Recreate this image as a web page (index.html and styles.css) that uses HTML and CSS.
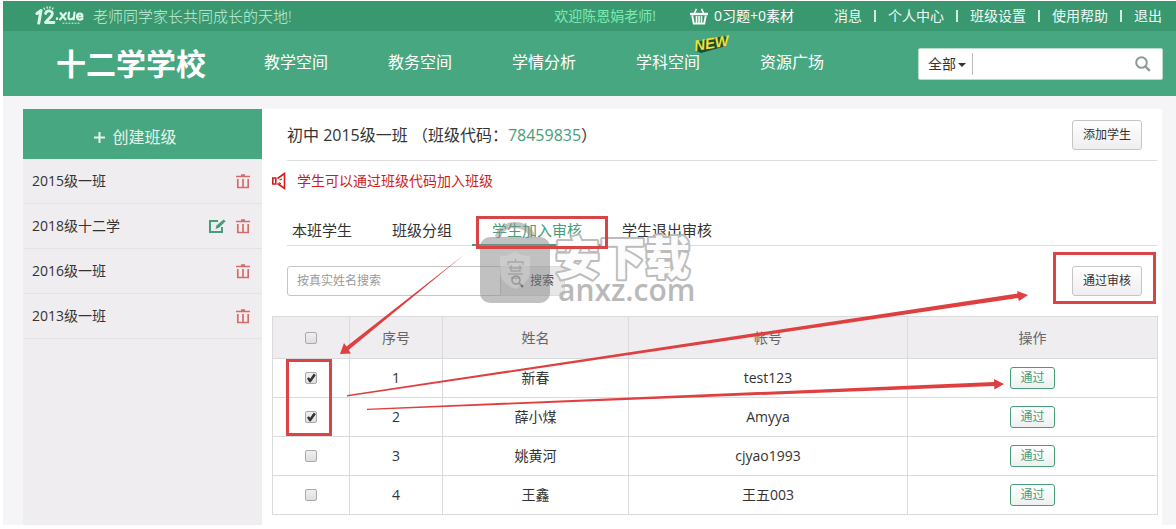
FILE: index.html
```html
<!DOCTYPE html>
<html lang="zh-CN">
<head>
<meta charset="utf-8">
<meta name="viewport" content="width=device-width, initial-scale=1">
<title>十二学学校</title>
<link rel="stylesheet" href="styles.css">
</head>
<body>
<svg class="defs" aria-hidden="true">
  <symbol id="trash" viewBox="0 0 14 15"><path d="M0 2.500h14M5 1h4" stroke-width="1.600"/><path d="M1.800 5v8.500h10.400V5M7 5v8" stroke-width="1.700"/></symbol>
  <symbol id="edit" viewBox="0 0 17 15"><path d="M9 2H1v11h12V8" stroke-width="2"/><path d="M6.500 10l1-3.400L14.600 .5l2 1.700L10 8.800z" class="solid"/></symbol>
</svg>
<div class="page">
  <div class="topbar">
    <a class="brand" href="#" aria-label="12xue">
      <svg width="50" height="20" viewBox="0 0 50 20" fill="none" stroke="#dcf8ea" stroke-linecap="round" stroke-linejoin="round">
        <path d="M2 7.500L6 4.500L3.800 17" stroke-width="3"/>
        <path d="M10.500 7.500C12 3.500 19 4.500 17 9C15.500 12 12 14 10.500 16.500H19" stroke-width="2.800"/>
        <path d="M9 2.200l.5 1M12 .8l.2 1.400M15 .8l-.2 1.400M18 2l-.5 1" stroke-width="1.300"/>
        <path d="M22 12.500v.2" stroke-width="2.500"/>
        <path d="M25.500 7l5 6.500M31 7l-6 6.500M34 6.500l-.5 4.500c-.3 3 4 3 5 .5M39.500 6.500l-.7 7M42 10.500h5.500c0-4-5-4-5.500-.3-.5 4 3.500 4 5.500 2.500" stroke-width="2.100"/>
        <path d="M28 17.200h16" stroke-width="1" stroke-dasharray="1 2"/>
      </svg>
    </a>
    <span class="slogan">老师同学家长共同成长的天地!</span>
    <span class="welcome">欢迎陈恩娟老师!</span>
    <a class="basket" href="#">
      <svg width="18" height="17" viewBox="0 0 18 17" fill="none" stroke="#fff"><path d="M0 6h18" stroke-width="2.400"/><path d="M2.200 7.500L3.800 15.600h10.400L15.800 7.500" stroke-width="1.900"/><path d="M4.500 5L6.500 .8M13.500 5L11.500 .8M6.500 8v7M9 8v7M11.500 8v7" stroke-width="1.600"/></svg>
      0习题+0素材
    </a>
    <nav class="links" aria-label="用户">
      <a href="#">消息</a><i></i><a href="#">个人中心</a><i></i><a href="#">班级设置</a><i></i><a href="#">使用帮助</a><i></i><a href="#">退出</a>
    </nav>
  </div>
  <header class="header">
    <h1 class="school">十二学学校</h1>
    <nav class="menu" aria-label="主导航">
      <a href="#">教学空间</a><a href="#">教务空间</a><a href="#">学情分析</a>
      <a href="#">学科空间
        <svg class="new" width="44" height="24" viewBox="0 0 44 24"><path d="M3 9L31 3l4 2-2 8L8 20l-4-2z" fill="#17512f"/><text x="2" y="18" transform="rotate(-9 2 18)">NEW</text></svg>
      </a>
      <a href="#">资源广场</a>
    </nav>
    <form class="search">
      <select class="scope" aria-label="搜索范围"><option>全部</option></select>
      <input class="query" type="text" aria-label="搜索内容">
      <button class="go" type="button" aria-label="搜索"><svg width="16" height="16" viewBox="0 0 16 16" fill="none" stroke="#8f9a95"><circle cx="6.500" cy="6.500" r="5.300" stroke-width="2"/><path d="M10.500 10.500l4.300 4.300" stroke-width="2.400"/></svg></button>
    </form>
  </header>
  <div class="body">
    <aside class="side">
      <button class="create" type="button"><svg width="11" height="11" viewBox="0 0 11 11"><path d="M5.500 0v11M0 5.500h11" stroke="#e4f5ec" stroke-width="2"/></svg>创建班级</button>
      <ul class="classes">
        <li><a href="#">2015级一班</a><button type="button" aria-label="删除"><svg class="trash"><use href="#trash"/></svg></button></li>
        <li><a href="#">2018级十二学</a><button type="button" aria-label="编辑"><svg class="edit"><use href="#edit"/></svg></button><button type="button" aria-label="删除"><svg class="trash"><use href="#trash"/></svg></button></li>
        <li><a href="#">2016级一班</a><button type="button" aria-label="删除"><svg class="trash"><use href="#trash"/></svg></button></li>
        <li><a href="#">2013级一班</a><button type="button" aria-label="删除"><svg class="trash"><use href="#trash"/></svg></button></li>
      </ul>
    </aside>
    <main class="main">
      <div class="title">
        <h2>初中 2015级一班 （班级代码：<b>78459835</b>）</h2>
        <button class="btn" type="button">添加学生</button>
      </div>
      <p class="notice"><svg width="14" height="18" viewBox="0 0 14 18" fill="none" stroke="#cf1c1c" stroke-width="1.600"><path d="M.8 6h3v6h-3zM5.500 6.500L12.500 1.500v15L5.500 11.500"/><path d="M7.500 8l2.500-1M7 10.500l2 1.500" stroke-width="1.200"/></svg>学生可以通过班级代码加入班级</p>
      <nav class="tabs" aria-label="学生管理">
        <a href="#">本班学生</a><a href="#">班级分组</a><a class="on" href="#">学生加入审核</a><a href="#">学生退出审核</a>
      </nav>
      <div class="tools">
        <form class="find">
          <input type="text" placeholder="按真实姓名搜索" aria-label="按真实姓名搜索">
          <button type="button"><svg width="13" height="13" viewBox="0 0 13 13" fill="none" stroke="#444"><circle cx="5" cy="5" r="4" stroke-width="1.600"/><path d="M8 8l4 4" stroke-width="2"/></svg>搜索</button>
        </form>
        <button class="btn" type="button">通过审核</button>
      </div>
      <table class="grid">
        <colgroup><col class="c1"><col class="c2"><col class="c3"><col class="c4"><col class="c5"></colgroup>
        <thead><tr><th><input type="checkbox" aria-label="全选"></th><th>序号</th><th>姓名</th><th>帐号</th><th>操作</th></tr></thead>
        <tbody>
          <tr><td><input type="checkbox" aria-label="新春" checked></td><td>1</td><td>新春</td><td>test123</td><td><button class="pass" type="button">通过</button></td></tr>
          <tr><td><input type="checkbox" aria-label="薛小煤" checked></td><td>2</td><td>薛小煤</td><td>Amyya</td><td><button class="pass" type="button">通过</button></td></tr>
          <tr><td><input type="checkbox" aria-label="姚黄河"></td><td>3</td><td>姚黄河</td><td>cjyao1993</td><td><button class="pass" type="button">通过</button></td></tr>
          <tr><td><input type="checkbox" aria-label="王鑫"></td><td>4</td><td>王鑫</td><td>王五003</td><td><button class="pass" type="button">通过</button></td></tr>
        </tbody>
      </table>
    </main>
  </div>
  <svg class="marks" width="1176" height="529" viewBox="0 0 1176 529">
    <g class="watermark">
      <path d="M498 237C501 221 529 221 532 237" fill="none" stroke="#8c8c8c" stroke-width="6" opacity=".5"/>
      <rect x="480" y="237" width="70" height="66" rx="10" fill="#8c8c8c" opacity=".54"/>
      <path d="M515 251c5 4 9 5 15 5v16c0 8-7 13-15 17-8-4-15-9-15-17v-16c6 0 10-1 15-5z" fill="#ddd" opacity=".4"/>
      <path d="M508 265v-3h15v3M515.500 259v3M509 268h13M511 265v6h9v-6M508 274h15M511 278h9" fill="none" stroke="#888" stroke-width="1.300" opacity=".55"/>
      <text class="wm-name" x="555" y="275">安下载</text>
      <text class="wm-site" x="558" y="301">anxz.com</text>
    </g>
    <g fill="none" stroke="#d94446" stroke-width="3">
      <rect x="477.500" y="217.500" width="129" height="30"/>
      <rect x="1054.500" y="253.500" width="100" height="49"/>
      <rect x="287.500" y="360.500" width="43" height="74"/>
    </g>
    <g fill="#e03f3f">
      <path d="M465 254L348.500 350L351 353.500L340 354L344 343L346.500 346.500Z"/>
      <path d="M347 395L1017.500 293.500L1017 291L1028 295L1019 301L1018 298L347 396.500Z"/>
      <path d="M367 408.700L994 382V379L1004 384L994.500 389.500L994 386L367 410Z"/>
    </g>
  </svg>
</div>
</body>
</html>
```
FILE: styles.css
```css
* { box-sizing: border-box; }
body {
  margin: 0;
  background: #fff;
  color: #333;
  font: 14px/20px "Open Sans", "Noto Sans CJK SC", sans-serif;
}
a { color: inherit; text-decoration: none; }
button, input, select { font: inherit; color: inherit; margin: 0; }
button { cursor: pointer; }
svg { flex: none; display: block; }
.defs { position: absolute; width: 0; height: 0; }
.page { position: relative; padding: 1px 0 4px 3px; }

.topbar {
  display: flex;
  align-items: center;
  height: 30px;
  padding: 0 14px 0 32px;
  background: #399870;
  color: #f0fbf5;
  white-space: nowrap;
}
.slogan { margin-left: 8px; font-size: 15px; font-weight: 300; color: #c4efd9; }
.welcome { margin-left: auto; color: #7deab0; }
.basket { display: flex; align-items: center; gap: 6px; margin-left: 34px; color: #fff; }
.links { display: flex; align-items: center; gap: 12px; margin-left: 40px; }
.links i { width: 2px; height: 12px; background: #cdeedd; }

.header {
  display: flex;
  align-items: center;
  height: 65px;
  padding: 0 13px 0 53px;
  background: #47a780;
  color: #fff;
  white-space: nowrap;
}
.school { margin: 0; font-size: 30px; line-height: 40px; font-weight: 700; }
.menu { display: flex; gap: 60px; margin-left: 58px; padding-bottom: 4px; font-size: 16px; }
.menu a { position: relative; }
.new { position: absolute; left: 57px; top: -19px; }
.new text { font: italic 700 15px "Liberation Sans", sans-serif; fill: #f2df3a; }
.search {
  display: flex;
  align-items: center;
  width: 245px;
  height: 32px;
  margin-left: auto;
  background: #fff;
  color: #333;
  border: 1px solid #b9dccb;
  border-radius: 2px;
}
.scope {
  appearance: none;
  width: 54px;
  height: 22px;
  padding: 0 0 0 9px;
  border: 0;
  border-right: 1px solid #bbb;
  background: url("data:image/svg+xml,%3Csvg xmlns='http://www.w3.org/2000/svg' width='8' height='4'%3E%3Cpath d='M0 0h8L4 4z' fill='%23333'/%3E%3C/svg%3E") 39px 10px no-repeat;
}
.query { flex: 1; min-width: 0; border: 0; background: none; }
.go { padding: 0 11px; border: 0; background: none; }

.body {
  display: flex;
  padding: 13px 14px 0 20px;
  background: #f5f4f7;
}
.side { width: 239px; flex: none; background: #efedf0; }
.create {
  display: flex;
  align-items: center;
  justify-content: center;
  gap: 7px;
  width: 100%;
  height: 50px;
  padding: 6px 14px 0 0;
  border: 0;
  background: #47a780;
  color: #e4f5ec;
  font-size: 16px;
}
.classes { margin: 0; padding: 0; list-style: none; }
.classes li {
  display: flex;
  align-items: center;
  gap: 10px;
  height: 45px;
  padding: 0 12px 0 9px;
  border-bottom: 1px solid #e4e2e5;
}
.classes a { flex: 1; }
.classes button { padding: 0; border: 0; background: none; }
.trash { width: 14px; height: 15px; fill: none; stroke: #d56c6c; }
.edit { width: 17px; height: 15px; fill: none; stroke: #479d78; }
.solid { fill: #479d78; stroke: none; }

.main { flex: 1; min-width: 0; padding: 0 5px 10px 10px; background: #fff; }
.title {
  display: flex;
  align-items: center;
  justify-content: space-between;
  height: 52px;
  margin-left: 15px;
  padding-right: 15px;
  border-bottom: 1px solid #ddd;
}
.title h2 { margin: 0; font-size: 16px; font-weight: 400; }
.title b { font-weight: 400; color: #479d78; }
.btn {
  width: 70px;
  height: 30px;
  padding: 0;
  border: 1px solid #c5c5c8;
  border-radius: 3px;
  background: linear-gradient(#fff, #efedf0);
  font-size: 12px;
}
.notice {
  display: flex;
  align-items: center;
  gap: 11px;
  height: 40px;
  margin: 0;
  color: #cf1c1c;
}
.tabs {
  display: flex;
  height: 45px;
  align-items: flex-end;
  background: linear-gradient(#ddd, #ddd) 15px 100% / 100% 1px no-repeat;
  font-size: 15px;
}
.tabs a { height: 30px; padding: 4px 20px 0; }
.tabs .on { color: #479d78; border-bottom: 2px solid #479d78; }
.tools {
  display: flex;
  justify-content: space-between;
  padding: 20px 15px;
  font-size: 12px;
}
.find { display: flex; height: 30px; }
.find input {
  width: 214px;
  padding: 0 9px;
  border: 1px solid #c5c5c8;
  border-radius: 3px 0 0 3px;
}
.find input::placeholder { color: #999; opacity: 1; }
.find button {
  display: flex;
  align-items: center;
  gap: 6px;
  padding: 0 10px;
  border: 1px solid #dcdadd;
  border-left: 0;
  border-radius: 0 3px 3px 0;
  background: #e8e6e9;
}
.grid { width: 100%; border-collapse: collapse; table-layout: fixed; }
.c1 { width: 77px; }
.c2 { width: 93px; }
.c3 { width: 186px; }
.c4 { width: 279px; }
.c5 { width: 250px; }
.grid th, .grid td {
  height: 39px;
  padding: 0;
  border: 1px solid #dad9dc;
  text-align: center;
  font-weight: 400;
}
.grid th { height: 42px; background: #efedf0; color: #666; }
.grid input {
  appearance: none;
  display: block;
  width: 12px;
  height: 12px;
  margin: 0 auto;
  border: 1px solid #aaa;
  border-radius: 2px;
  background: linear-gradient(#f0f0f0, #dedede);
}
.grid input:checked::after {
  content: "";
  display: block;
  height: 10px;
  background: #333;
  clip-path: polygon(10% 55%, 28% 42%, 42% 58%, 78% 5%, 98% 22%, 46% 95%, 34% 92%);
}
.pass {
  width: 45px;
  height: 22px;
  padding: 0;
  border: 1px solid #479d78;
  border-radius: 3px;
  background: linear-gradient(#fff, #eef0ef);
  color: #479d78;
  font-size: 12px;
  line-height: 18px;
  vertical-align: middle;
}
.marks { position: absolute; left: 0; top: 0; pointer-events: none; }
.wm-name {
  font: 900 45px "Noto Sans CJK SC", sans-serif;
  fill: #fcfcfc;
  stroke: #bcbcbc;
  stroke-width: 4;
  stroke-linejoin: round;
  paint-order: stroke;
}
.wm-site { font: 600 30px "Open Sans", sans-serif; fill: #b9b9b9; }
```
